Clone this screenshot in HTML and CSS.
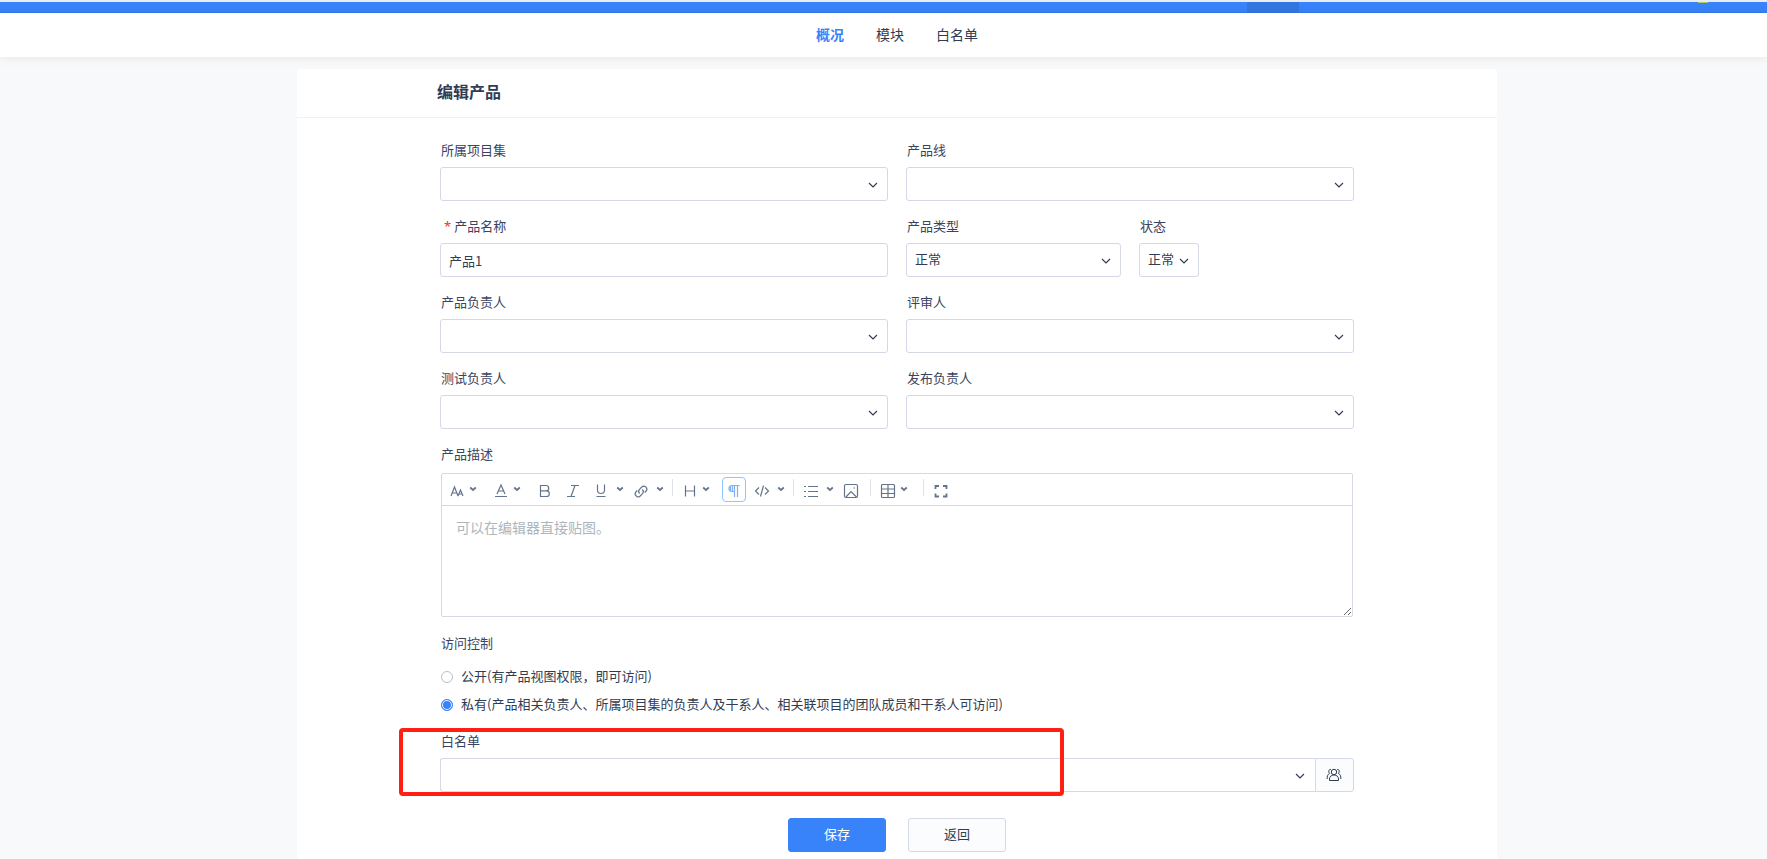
FILE: index.html
```html
<!DOCTYPE html>
<html lang="zh-CN">
<head>
    <meta charset="UTF-8">
    <meta name="viewport" content="width=device-width, initial-scale=1.0">
    <title>编辑产品</title>
    <link rel="stylesheet" href="styles.css">
</head>
<body>
    <!-- shared icons -->
    <svg class="sprite" aria-hidden="true">
        <symbol id="caret" viewBox="0 0 10 6"><path d="M1 1l4 4 4-4" fill="none" stroke="currentColor" stroke-width="1.150"/></symbol>
        <symbol id="caret-small" viewBox="0 0 8 6"><path d="M1.2 1.5L4 4l2.800-2.500" fill="none" stroke="currentColor" stroke-width="1.700"/></symbol>
    </svg>

    <header class="topbar">
        <span class="topbar-active"></span>
        <span class="topbar-avatar"></span>
    </header>

    <nav class="subnav">
        <a href="#" class="active">概况</a>
        <a href="#">模块</a>
        <a href="#">白名单</a>
    </nav>

    <main class="main">
        <div class="panel">
            <div class="panel-header">
                <h1>编辑产品</h1>
            </div>
            <form class="form">
                <div class="field half">
                    <label for="program">所属项目集</label>
                    <div class="select">
                        <select id="program"><option></option></select>
                        <svg class="caret"><use href="#caret"/></svg>
                    </div>
                </div>
                <div class="field half">
                    <label for="line">产品线</label>
                    <div class="select">
                        <select id="line"><option></option></select>
                        <svg class="caret"><use href="#caret"/></svg>
                    </div>
                </div>

                <div class="field half">
                    <label for="name" class="required">产品名称</label>
                    <input type="text" id="name" class="control" value="产品1">
                </div>
                <div class="field quarter">
                    <label for="type">产品类型</label>
                    <div class="select">
                        <select id="type"><option>正常</option></select>
                        <svg class="caret"><use href="#caret"/></svg>
                    </div>
                </div>
                <div class="field quarter">
                    <label for="status">状态</label>
                    <div class="select select-small">
                        <select id="status"><option>正常</option></select>
                        <svg class="caret"><use href="#caret"/></svg>
                    </div>
                </div>

                <div class="field half">
                    <label for="po">产品负责人</label>
                    <div class="select">
                        <select id="po"><option></option></select>
                        <svg class="caret"><use href="#caret"/></svg>
                    </div>
                </div>
                <div class="field half">
                    <label for="reviewer">评审人</label>
                    <div class="select">
                        <select id="reviewer"><option></option></select>
                        <svg class="caret"><use href="#caret"/></svg>
                    </div>
                </div>

                <div class="field half">
                    <label for="qd">测试负责人</label>
                    <div class="select">
                        <select id="qd"><option></option></select>
                        <svg class="caret"><use href="#caret"/></svg>
                    </div>
                </div>
                <div class="field half">
                    <label for="rd">发布负责人</label>
                    <div class="select">
                        <select id="rd"><option></option></select>
                        <svg class="caret"><use href="#caret"/></svg>
                    </div>
                </div>

                <div class="field full">
                    <label for="desc">产品描述</label>
                    <div class="editor">
                        <div class="toolbar">
                            <button type="button" class="tool menu" aria-label="字号">
                                <svg class="icon" viewBox="0 0 16 16"><path d="M2 13L5.500 4 9 13M3.200 10h4.600M9 13l2.500-6L14 13M10 11h3"/></svg>
                                <svg class="arrow"><use href="#caret-small"/></svg>
                            </button>
                            <button type="button" class="tool menu" aria-label="文字颜色">
                                <svg class="icon" viewBox="0 0 16 16"><path d="M4 11L8 2l4 9M5.300 8h5.400M2 13.500h12"/></svg>
                                <svg class="arrow"><use href="#caret-small"/></svg>
                            </button>
                            <button type="button" class="tool" aria-label="粗体">
                                <svg class="icon" viewBox="0 0 16 16"><path d="M3.500 2.500h5.500a2.700 2.700 0 0 1 0 5.400H3.500zM3.500 7.900h6a2.800 2.800 0 0 1 0 5.600h-6z"/></svg>
                            </button>
                            <button type="button" class="tool" aria-label="斜体">
                                <svg class="icon" viewBox="0 0 16 16"><path d="M6 2.500h8M2 13.500h8M10 2.500l-4 11"/></svg>
                            </button>
                            <button type="button" class="tool menu wide" aria-label="下划线">
                                <svg class="icon" viewBox="0 0 16 16"><path d="M4.500 1.500v5.500a3.500 3.500 0 0 0 7 0V1.500M3.500 13.500h9"/></svg>
                                <svg class="arrow"><use href="#caret-small"/></svg>
                            </button>
                            <button type="button" class="tool menu wide" aria-label="链接">
                                <svg class="icon" viewBox="0 0 16 16"><path d="M6.700 10.500a3 3 0 0 1-.2-4.200l2.500-2.500a3 3 0 0 1 4.200 4.200l-1.500 1.500M9.300 6.500a3 3 0 0 1 .2 4.200L7 13.200A3 3 0 0 1 2.800 9l1.500-1.500"/></svg>
                                <svg class="arrow"><use href="#caret-small"/></svg>
                            </button>
                            <span class="divider"></span>
                            <button type="button" class="tool menu" aria-label="标题">
                                <svg class="icon" viewBox="0 0 16 16"><path d="M3.500 2.500v11M12.500 2.500v11M3.500 8h9"/></svg>
                                <svg class="arrow"><use href="#caret-small"/></svg>
                            </button>
                            <button type="button" class="tool selected" aria-label="段落">
                                <svg class="icon" viewBox="0 0 16 16"><path d="M13.500 2.500H6a3 3 0 0 0 0 6h2.500M8.500 2.500v11.500M11.500 2.500v11.500M4.500 3.500v4M6.500 3v5"/></svg>
                            </button>
                            <button type="button" class="tool menu wide" aria-label="代码">
                                <svg class="icon" viewBox="0 0 16 16"><path d="M5 4.500L1.500 8 5 11.500M11 4.500L14.500 8 11 11.500M9.500 2.500l-3 11"/></svg>
                                <svg class="arrow"><use href="#caret-small"/></svg>
                            </button>
                            <span class="divider"></span>
                            <button type="button" class="tool menu wide" aria-label="列表">
                                <svg class="icon" viewBox="0 0 16 16"><path d="M5 3.500h10M5 8.500h10M5 13.500h10M1 3.500h2M1 8.500h2M1 13.500h2"/></svg>
                                <svg class="arrow"><use href="#caret-small"/></svg>
                            </button>
                            <button type="button" class="tool" aria-label="图片">
                                <svg class="icon" viewBox="0 0 16 16"><rect x="1.500" y="1.500" width="13" height="13" rx="1.500"/><path d="M3 14l5-5.500 5.500 5.500M10.500 5h1.500"/></svg>
                            </button>
                            <span class="divider"></span>
                            <button type="button" class="tool menu" aria-label="表格">
                                <svg class="icon" viewBox="0 0 16 16"><rect x="1.500" y="1.500" width="13" height="13" rx="1"/><path d="M1.500 6h13M1.500 10.500h13M8 1.500v13"/></svg>
                                <svg class="arrow"><use href="#caret-small"/></svg>
                            </button>
                            <span class="divider"></span>
                            <button type="button" class="tool" aria-label="全屏">
                                <svg class="icon thick" viewBox="0 0 16 16"><path d="M2.500 6V3H6M10 3h3.500v3M13.500 10.500v3H10M6 13.500H2.500v-3"/></svg>
                            </button>
                        </div>
                        <textarea id="desc" placeholder="可以在编辑器直接贴图。"></textarea>
                    </div>
                </div>

                <div class="field full" role="radiogroup" aria-labelledby="acl-label">
                    <span class="label" id="acl-label">访问控制</span>
                    <div class="radios">
                        <label><input type="radio" name="acl" value="open">公开(有产品视图权限，即可访问)</label>
                        <label><input type="radio" name="acl" value="private" checked>私有(产品相关负责人、所属项目集的负责人及干系人、相关联项目的团队成员和干系人可访问)</label>
                    </div>
                </div>

                <div class="field full whitelist">
                    <label for="whitelist">白名单</label>
                    <div class="input-group">
                        <div class="select">
                            <select id="whitelist"><option></option></select>
                            <svg class="caret"><use href="#caret"/></svg>
                        </div>
                        <button type="button" class="group-btn" aria-label="选择用户">
                            <svg viewBox="0 0 16 16"><circle cx="8" cy="5" r="2.700"/><path d="M3.500 13.500v-1.500c0-2.400 1.900-4 4.500-4s4.500 1.600 4.500 4v1.500zM5 2.500C2.800 1.900 2 4.800 3.600 6.400 1.600 7.400 1 9.500 1.200 12M11 2.500c2.200-.6 3 2.300 1.400 3.900 2 1 2.600 3.100 2.400 5.600"/></svg>
                        </button>
                    </div>
                    <span class="highlight"></span>
                </div>

                <div class="actions full">
                    <button type="submit" class="btn btn-primary">保存</button>
                    <button type="button" class="btn">返回</button>
                </div>
            </form>
        </div>
    </main>
</body>
</html>
```
FILE: styles.css
```css
* {
    box-sizing: border-box;
}

body {
    margin: 0;
    min-height: 100vh;
    display: flex;
    flex-direction: column;
    background: #f8f9fb;
    color: #313c52;
    font: 13px/20px "Noto Sans CJK SC", sans-serif;
}

button, input, select, textarea {
    font: inherit;
    color: inherit;
}

.sprite {
    position: absolute;
    width: 0;
    height: 0;
}

/* Top bar */
.topbar {
    display: flex;
    justify-content: flex-end;
    height: 13px;
    padding-right: 59px;
    border-top: 2px solid #e9edf2;
    background: #3883fa;
    box-shadow: inset 0 -1px #347ae8;
}

.topbar-active {
    width: 52px;
    margin-right: 399px;
    background: #3376e1;
}

.topbar-avatar {
    width: 10px;
    height: 1px;
    background: #a8c66c;
}

/* Second level navigation */
.subnav {
    display: flex;
    justify-content: center;
    gap: 32px;
    height: 44px;
    padding-left: 27px;
    background: #fff;
    box-shadow: 0 1px 10px rgba(0, 0, 0, .08);
    font-size: 14px;
    line-height: 42px;
}

.subnav a {
    color: #313c52;
    text-decoration: none;
}

.subnav .active {
    color: #3883fa;
    font-weight: bold;
}

/* Panel */
.main {
    flex: 1;
    display: flex;
    justify-content: center;
    padding: 12px 0 0 27px;
}

.panel {
    width: 1200px;
    background: #fff;
    border-radius: 4px 4px 0 0;
}

.panel-header {
    padding: 10px 140px 14px;
    border-bottom: 1px solid #eff1f4;
}

.panel-header h1 {
    margin: 0;
    font-size: 16px;
    line-height: 24px;
}

.form {
    display: grid;
    grid-template-columns: repeat(4, 1fr);
    gap: 10px 18px;
    padding: 17px 143px 7px;
}

.half {
    grid-column: span 2;
}

.full {
    grid-column: 1 / -1;
}

.field > label, .label {
    display: block;
    padding: 0 0 2px 1px;
    line-height: 30px;
    color: #3c4360;
}

.required::before {
    content: "*";
    margin: 0 3px;
    color: #fb2b2b;
    font-family: "Noto Sans", sans-serif;
    line-height: 20px;
}

/* Controls */
.control, .select select {
    display: block;
    width: 100%;
    height: 34px;
    padding: 0 8px;
    border: 1px solid #d4d8e7;
    border-radius: 3px;
    background: #fff;
}

.select {
    position: relative;
}

.select select {
    appearance: none;
    padding-bottom: 2px;
}

.select-small {
    width: 60px;
}

.caret {
    position: absolute;
    top: 15px;
    right: 10px;
    width: 10px;
    height: 6px;
    pointer-events: none;
}

/* Editor */
.editor {
    margin: 2px 1px 1px;
    border: 1px solid #d4d8e7;
    border-radius: 2px;
}

.toolbar {
    display: flex;
    align-items: center;
    gap: 4px;
    height: 32px;
    padding: 0 3px;
    border-bottom: 1px solid #d4d8e7;
}

.tool {
    display: flex;
    align-items: center;
    width: 24px;
    height: 25px;
    padding: 2px 3px 0;
    border: 1px solid transparent;
    border-radius: 4px;
    background: none;
    color: #64758b;
}

.tool.menu {
    width: 40px;
}

.tool.wide {
    width: 36px;
}

.tool.selected {
    border-color: #8ec5ff;
    color: #7fb0f5;
}

.icon {
    flex: none;
    width: 16px;
    height: 16px;
    fill: none;
    stroke: currentColor;
    stroke-width: 1.2;
}

.icon.thick {
    stroke-width: 1.8;
}

.arrow {
    flex: none;
    width: 8px;
    height: 6px;
    margin: 0 0 4px 4px;
}

.wide .arrow {
    margin-left: 7px;
}

.divider {
    width: 1px;
    height: 17px;
    margin: 0 1px 5px 3px;
    background: #dfe2e8;
}

.editor textarea {
    display: block;
    width: 100%;
    height: 110px;
    padding: 11px 14px;
    border: 0;
    outline: 0;
    resize: vertical;
    background: none;
    font-size: 14px;
}

.editor textarea::placeholder {
    color: #adb5bd;
}

/* Access control */
.radios {
    display: flex;
    flex-direction: column;
    align-items: flex-start;
    gap: 8px;
    padding: 6px 1px 2px;
}

.radios label {
    display: flex;
    align-items: center;
    gap: 8px;
}

.radios input {
    appearance: none;
    flex: none;
    width: 12px;
    height: 12px;
    margin: 2px 0 0;
    border: 1px solid #b9bec8;
    border-radius: 50%;
}

.radios input:checked {
    border-color: #3883fa;
    background: #3883fa;
    box-shadow: inset 0 0 0 1px #fff;
}

/* Whitelist */
.whitelist {
    position: relative;
}

.input-group {
    display: flex;
}

.input-group .select {
    flex: 1;
}

.input-group select {
    border-right: 0;
    border-radius: 3px 0 0 3px;
}

.group-btn {
    display: flex;
    align-items: center;
    justify-content: center;
    width: 39px;
    height: 34px;
    padding: 0 2px 0 0;
    border: 1px solid #d4d8e7;
    border-radius: 0 3px 3px 0;
    background: #fbfcfe;
}

.group-btn svg {
    width: 16px;
    height: 16px;
    fill: none;
    stroke: currentColor;
}

/* Red frame around the whitelist field */
.highlight {
    position: absolute;
    top: 2px;
    left: -41px;
    width: 665px;
    height: 68px;
    border: 4px solid #ff1f13;
    border-radius: 4px;
    pointer-events: none;
}

/* Buttons */
.actions {
    display: flex;
    justify-content: center;
    gap: 22px;
    padding-top: 16px;
}

.btn {
    width: 98px;
    height: 34px;
    padding: 0 0 2px;
    border: 1px solid #d4d8e7;
    border-radius: 3px;
    background: #fbfcfe;
}

.btn-primary {
    border-color: #3883fa;
    background: #3883fa;
    color: #fff;
}
```
